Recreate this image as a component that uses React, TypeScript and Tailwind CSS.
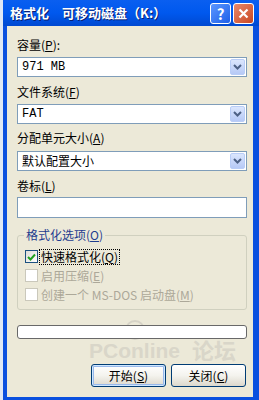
import type { ReactNode } from 'react';

const FONT = { fontFamily: '"Noto Sans CJK SC", "Liberation Sans", sans-serif' };
const MONO = { fontFamily: '"Liberation Mono", "Noto Sans CJK SC", monospace' };

function Key({ k }: { k: string }) {
  return (
    <>
      (<u>{k}</u>)
    </>
  );
}

function ComboBox({ value, mono }: { value: string; mono?: boolean }) {
  return (
    <div className="flex h-[20px] items-center border border-[#7f9db9] bg-white pl-[4px] pr-[1px]">
      <span className="flex-1 text-[12px] leading-[14px] text-black" style={mono ? MONO : FONT}>
        {value}
      </span>
      <div className="flex h-[16px] w-[15px] items-center justify-center rounded-[2px] border border-[#b9cdf7] bg-gradient-to-b from-[#dbe6fd] to-[#b6c9f6]">
        <svg width="9" height="6" viewBox="0 0 9 6">
          <polyline points="1,1 4.5,4.5 8,1" fill="none" stroke="#4d6185" strokeWidth="2" />
        </svg>
      </div>
    </div>
  );
}

function CheckRow({ checked, disabled, focused, children }: { checked?: boolean; disabled?: boolean; focused?: boolean; children: ReactNode }) {
  return (
    <div className="flex h-[19px] items-center gap-[1px]">
      <div
        className={
          disabled
            ? 'flex h-[13px] w-[13px] items-center justify-center border border-[#cac8bb] bg-white'
            : 'flex h-[13px] w-[13px] items-center justify-center border border-[#1c5180] bg-gradient-to-br from-[#dcdcd7] to-white'
        }
      >
        {checked && (
          <svg width="9" height="8" viewBox="0 0 9 8">
            <polyline points="1,4 3.5,6.5 8,1.5" fill="none" stroke="#21a121" strokeWidth="2" />
          </svg>
        )}
      </div>
      <span
        className={
          (disabled ? 'text-[#aca899] ' : 'text-black ') +
          (focused ? 'border border-dotted border-black ' : 'border border-transparent ') +
          'px-[1px] text-[12px] leading-[14px]'
        }
        style={FONT}
      >
        {children}
      </span>
    </div>
  );
}

function XpButton({ label, isDefault }: { label: ReactNode; isDefault?: boolean }) {
  return (
    <div
      className={
        'flex h-[23px] w-[75px] items-center justify-center rounded-[3px] border border-[#003c74] bg-gradient-to-b from-white via-[#f4f3ee] to-[#dcd8cc] text-[12px] leading-[14px] text-black ' +
        (isDefault ? 'shadow-[inset_0_0_0_1px_#cee7ff,inset_0_0_0_2px_#98b8ea]' : '')
      }
      style={FONT}
    >
      {label}
    </div>
  );
}

export default function App() {
  return (
    <div className="flex h-[400px] w-[259px] overflow-hidden bg-[#c9d7ec]" style={FONT}>
      <div className="w-[3px] bg-[#dfe8f5]" />
      <div className="relative flex flex-1 flex-col bg-[#0a50df]">
        {/* title bar */}
        <div className="flex h-[26px] items-center bg-gradient-to-b from-[#0a5ff0] via-[#0058ee] to-[#0049d1] pl-[7px] pr-[5px]">
          <span
            className="flex-1 text-[13px] font-bold leading-[16px] text-white [text-shadow:1px_1px_0_#0a1f70]"
            style={FONT}
          >
            格式化　可移动磁盘（K:）
          </span>
          <div className="flex items-center gap-[2px]">
            <div className="flex h-[21px] w-[21px] items-center justify-center rounded-[3px] border border-white bg-gradient-to-br from-[#5a97ff] to-[#1e5ee8] text-[15px] font-bold leading-none text-white">
              ?
            </div>
            <div className="flex h-[21px] w-[21px] items-center justify-center rounded-[3px] border border-white bg-gradient-to-br from-[#e8886a] to-[#c9461e]">
              <svg width="11" height="11" viewBox="0 0 11 11">
                <path d="M1.5 1.5 L9.5 9.5 M9.5 1.5 L1.5 9.5" stroke="white" strokeWidth="2.2" />
              </svg>
            </div>
          </div>
        </div>

        <div className="flex flex-1">
          <div className="w-[4px]" />
          {/* client area */}
          <div className="relative flex flex-1 flex-col bg-[#ece9d8] pl-[10px] pr-[6px] pt-[12px] text-[12px] leading-[14px] text-black">
            {/* watermark, kept just above the buttons */}
            <div className="pointer-events-none absolute left-[82px] top-[294px] flex items-end gap-[12px]">
              <div className="flex flex-col items-center">
                <div className="h-[20px] w-[20px] rounded-full border-2 border-[#d6d3c6]" />
                <span
                  className="text-[21px] font-bold leading-[21px] text-[#d9d6c9]"
                  style={{ fontFamily: '"Liberation Sans", Arial, sans-serif' }}
                >
                  PConline
                </span>
              </div>
              <span className="text-[22px] font-bold leading-[24px] text-[#d9d6c9]">论坛</span>
            </div>

            <div>
              容量<Key k="P" />:
            </div>
            <div className="mt-[5px]">
              <ComboBox value="971 MB" mono />
            </div>
            <div className="mt-[8px]">
              文件系统<Key k="F" />
            </div>
            <div className="mt-[5px]">
              <ComboBox value="FAT" mono />
            </div>
            <div className="mt-[7px]">
              分配单元大小<Key k="A" />
            </div>
            <div className="mt-[6px]">
              <ComboBox value="默认配置大小" />
            </div>
            <div className="mt-[8px]">
              卷标<Key k="L" />
            </div>
            <div className="mt-[4px] h-[21px] border border-[#7f9db9] bg-white" />

            {/* group box */}
            <div className="relative mt-[17px] h-[75px] rounded-[3px] border border-[#d0d0bf] px-[7px] pt-[11px]">
              <div className="absolute -top-[8px] left-[6px] bg-[#ece9d8] px-[2px] text-[#1f3d8f]">
                格式化选项<Key k="O" />
              </div>
              <CheckRow checked focused>
                快速格式化<Key k="Q" />
              </CheckRow>
              <CheckRow disabled>
                启用压缩<Key k="E" />
              </CheckRow>
              <CheckRow disabled>
                创建一个 MS-DOS 启动盘<Key k="M" />
              </CheckRow>
            </div>

            <div className="relative mt-[15px] h-[14px] rounded-[3px] border border-[#686868] bg-white" />

            <div className="relative mt-[25px] flex justify-end gap-[5px] pr-[1px]">
              <XpButton isDefault label={<>开始<Key k="S" /></>} />
              <XpButton label={<>关闭<Key k="C" /></>} />
            </div>
          </div>
          <div className="w-[6px]" />
        </div>
        <div className="h-[3px]" />
      </div>
    </div>
  );
}
